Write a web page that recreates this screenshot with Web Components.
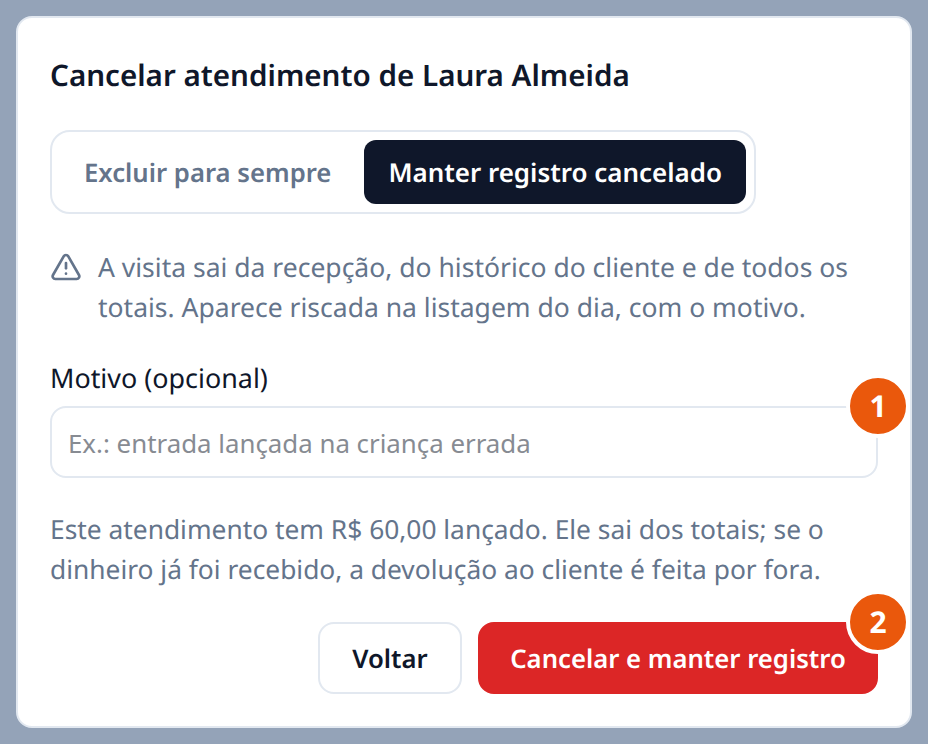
<!DOCTYPE html>
<html lang="pt-BR">
<head>
<meta charset="utf-8">
<title>Cancelar atendimento</title>
<style>
  html, body { margin: 0; height: 100%; }
  body { background: #94a3b8; font-family: "Noto Sans", sans-serif; color: #0f172a; text-rendering: geometricPrecision; }
</style>
</head>
<body>
<cancel-dialog>
  <span slot="title">Cancelar atendimento de Laura Almeida</span>
  <seg-switch slot="mode" first="Excluir para sempre" second="Manter registro cancelado"></seg-switch>
  <warn-note slot="warning">A visita sai da recepção, do histórico do cliente e de todos os totais. Aparece riscada na listagem do dia, com o motivo.</warn-note>
  <reason-field slot="field" label="Motivo (opcional)" placeholder="Ex.: entrada lançada na criança errada"></reason-field>
  <span slot="info">Este atendimento tem R$ 60,00 lançado. Ele sai dos totais; se o dinheiro já foi recebido, a devolução ao cliente é feita por fora.</span>
  <action-btn slot="actions">Voltar</action-btn>
  <action-btn slot="actions" kind="danger" badge="2">Cancelar e manter registro</action-btn>
</cancel-dialog>

<script>
const dialogTpl = document.createElement('template');
dialogTpl.innerHTML = `
  <style>
    :host { display: block; box-sizing: border-box; margin: 16px; height: 712px; background: #fff; border: 2px solid #e2e8f0; border-radius: 16px; padding: 32px; }
    h2 { margin: 0; font-size: 29.6px; line-height: 50px; font-weight: 600; color: #0f172a; }
    .mode { margin-top: 30px; height: 84px; }
    .warn { margin-top: 33px; }
    .field { margin-top: 31px; }
    p { margin: 31px 0 0; font-size: 26.35px; line-height: 40px; color: #64748b; }
    .actions { display: flex; justify-content: flex-end; gap: 16px; margin-top: 33px; }
  </style>
  <h2><slot name="title"></slot></h2>
  <div class="mode"><slot name="mode"></slot></div>
  <div class="warn"><slot name="warning"></slot></div>
  <div class="field"><slot name="field"></slot></div>
  <p><slot name="info"></slot></p>
  <div class="actions"><slot name="actions"></slot></div>
`;
class CancelDialog extends HTMLElement {
  constructor() {
    super();
    this.attachShadow({mode: 'open'});
    this.shadowRoot.appendChild(dialogTpl.content.cloneNode(true));
  }
}
customElements.define('cancel-dialog', CancelDialog);

class SegSwitch extends HTMLElement {
  constructor() {
    super();
    this.attachShadow({mode: 'open'});
    this.shadowRoot.innerHTML = `
      <style>
        :host { display: inline-flex; box-sizing: border-box; height: 84px; padding: 8px; gap: 8px; border: 2px solid #e2e8f0; border-radius: 20px; background: #fff; }
        span { display: flex; align-items: center; padding: 0 24px; border-radius: 12px; font-size: 25.95px; font-weight: 600; color: #64748b; white-space: nowrap; }
        .off { font-size: 25.7px; margin-right: 1px; }
        .on { background: #0f172a; color: #fff; }
      </style>
      <span class="off">${this.getAttribute('first')}</span>
      <span class="on">${this.getAttribute('second')}</span>
    `;
  }
}
customElements.define('seg-switch', SegSwitch);

class WarnNote extends HTMLElement {
  constructor() {
    super();
    this.attachShadow({mode: 'open'});
    this.shadowRoot.innerHTML = `
      <style>
        :host { display: flex; gap: 16px; font-size: 26.5px; line-height: 40px; color: #64748b; }
        svg { flex: none; width: 32px; height: 32px; margin-top: 4px; }
      </style>
      <svg viewBox="0 0 24 24" fill="none" stroke="currentColor" stroke-width="2" stroke-linecap="round" stroke-linejoin="round">
        <path d="m21.73 18-8-14a2 2 0 0 0-3.48 0l-8 14A2 2 0 0 0 4 21h16a2 2 0 0 0 1.73-3"/>
        <path d="M12 9v4"/>
        <path d="M12 17h.01"/>
      </svg>
      <div><slot></slot></div>
    `;
  }
}
customElements.define('warn-note', WarnNote);

class ReasonField extends HTMLElement {
  constructor() {
    super();
    this.attachShadow({mode: 'open'});
    this.shadowRoot.innerHTML = `
      <style>
        :host { display: block; position: relative; }
        label { display: block; font-size: 26.9px; line-height: 40px; color: #0f172a; margin-bottom: 8px; }
        input { display: block; box-sizing: border-box; width: 100%; height: 72px; padding: 2px 16px 0; border: 2px solid #e2e8f0; border-radius: 16px; background: #fff; font: inherit; font-size: 25.85px; color: #0f172a; outline: none; }
        input::placeholder { color: #878b92; opacity: 1; }
        num-badge { position: absolute; right: -32px; top: 16px; }
      </style>
      <label for="m">${this.getAttribute('label')}</label>
      <input id="m" placeholder="${this.getAttribute('placeholder')}">
      <num-badge>1</num-badge>
    `;
  }
}
customElements.define('reason-field', ReasonField);

class NumBadge extends HTMLElement {
  constructor() {
    super();
    this.attachShadow({mode: 'open'});
    this.shadowRoot.innerHTML = `
      <style>
        :host { display: flex; align-items: center; justify-content: center; box-sizing: content-box; width: 56px; height: 56px; background: #ea580c; color: #fff; border: 4px solid #fff; border-radius: 50%; font-size: 30px; font-weight: 700; line-height: 1; }
      </style>
      <slot></slot>
    `;
  }
}
customElements.define('num-badge', NumBadge);

class ActionBtn extends HTMLElement {
  constructor() {
    super();
    this.attachShadow({mode: 'open'});
    const badge = this.getAttribute('badge');
    this.shadowRoot.innerHTML = `
      <style>
        :host { display: flex; position: relative; align-items: center; justify-content: center; box-sizing: border-box; width: 144px; height: 72px; border: 2px solid #e2e8f0; border-radius: 16px; background: #fff; color: #0f172a; font-size: 25.7px; font-weight: 600; white-space: nowrap; }
        :host([kind="danger"]) { width: 400px; background: #dc2626; border-color: #dc2626; color: #fff; }
        num-badge { position: absolute; right: -34px; top: -34px; }
      </style>
      <slot></slot>
      ${badge ? `<num-badge>${badge}</num-badge>` : ''}
    `;
  }
}
customElements.define('action-btn', ActionBtn);
</script>
</body>
</html>
